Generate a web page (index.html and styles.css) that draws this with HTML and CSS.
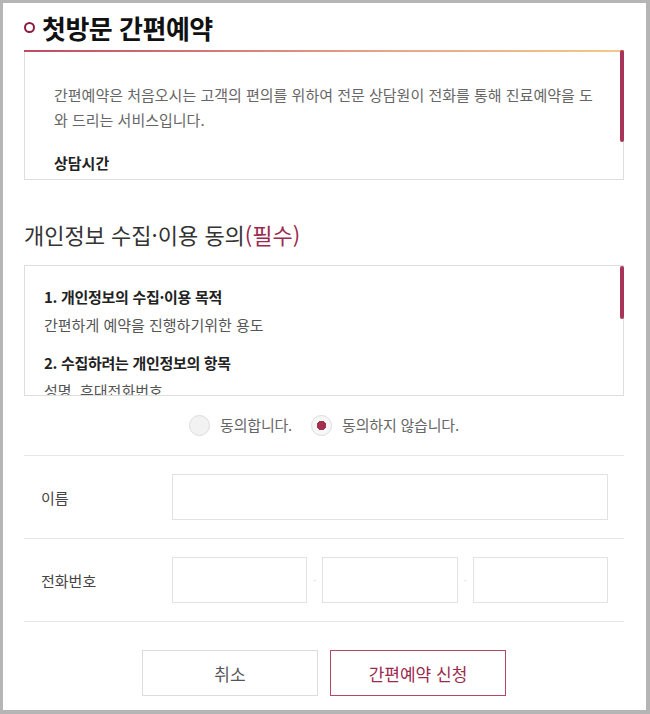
FILE: index.html
```html
<!DOCTYPE html>
<html lang="ko">
<head>
<meta charset="utf-8">
<title>첫방문 간편예약</title>
<link rel="stylesheet" href="styles.css">
</head>
<body>
<div class="panel">
  <h1 class="title"><span class="bullet"></span>첫방문 간편예약</h1>

  <div class="info-wrap">
    <div class="rule"></div>
    <div class="info">
      <p class="info-text">간편예약은 처음오시는 고객의 편의를 위하여 전문 상담원이 전화를 통해 진료예약을 도와 드리는 서비스입니다.</p>
      <p class="info-sub">상담시간</p>
    </div>
    <span class="thumb thumb-info"></span>
  </div>

  <h2 class="section-title">개인정보 수집·이용 동의<em>(필수)</em></h2>

  <div class="terms-wrap">
    <div class="terms">
      <div class="term">
        <h3>1. 개인정보의 수집·이용 목적</h3>
        <p>간편하게 예약을 진행하기위한 용도</p>
      </div>
      <div class="term">
        <h3>2. 수집하려는 개인정보의 항목</h3>
        <p>성명, 휴대전화번호</p>
      </div>
    </div>
    <span class="thumb thumb-terms"></span>
  </div>

  <div class="agree">
    <label class="radio"><input type="radio" name="agree">동의합니다.</label>
    <label class="radio"><input type="radio" name="agree" checked>동의하지 않습니다.</label>
  </div>

  <div class="form">
    <div class="row">
      <span class="label">이름</span>
      <input class="field" type="text">
    </div>
    <div class="row">
      <span class="label">전화번호</span>
      <div class="phone">
        <input class="field" type="text">
        <span class="dash">-</span>
        <input class="field" type="text">
        <span class="dash">-</span>
        <input class="field" type="text">
      </div>
    </div>
  </div>

  <div class="buttons">
    <button class="btn" type="button">취소</button>
    <button class="btn btn-primary" type="button">간편예약 신청</button>
  </div>
</div>
</body>
</html>
```

FILE: styles.css
```css
* { box-sizing: border-box; }

html, body { height: 100%; }

body {
  margin: 0;
  padding: 3px 4px 4px 3px;
  background: #b5b5b5;
  font-family: "Noto Sans CJK KR", "Noto Sans", sans-serif;
  color: #333;
  overflow: hidden;
}

.panel {
  height: 100%;
  background: #fff;
  padding: 10px 22px 14px 21px;
}

.title {
  margin: 0;
  display: flex;
  align-items: center;
  gap: 7px;
  font-size: 26px;
  font-weight: 700;
  line-height: 30px;
  letter-spacing: -0.5px;
  color: #111;
  margin-bottom: 7px;
}

.bullet {
  flex: none;
  width: 11px;
  height: 11px;
  border: 2.5px solid #8c1d3d;
  border-radius: 50%;
  margin-top: -1px;
}

.info-wrap, .terms-wrap { position: relative; }

.rule {
  height: 2px;
  background: linear-gradient(to right, #c04a62, #e8a488 60%, #f2c98a);
}

.info {
  height: 128px;
  border: 1px solid #dedede;
  border-top: 0;
  padding: 30px 30px 0 29px;
  overflow: hidden;
}

.info-text {
  margin: 0;
  font-size: 15px;
  line-height: 25px;
  color: #666;
}

.info-sub {
  margin: 18px 0 0;
  font-size: 15px;
  font-weight: 700;
  line-height: 25px;
  color: #222;
}

.thumb {
  position: absolute;
  right: 0;
  width: 4px;
  border-radius: 2px;
  background: #a8345a;
}

.thumb-info { top: 0; height: 92px; }
.thumb-terms { top: 1px; height: 53px; }

.section-title {
  margin: 39px 0 16px;
  font-size: 22px;
  font-weight: 400;
  line-height: 30px;
  color: #333;
}

.section-title em {
  font-style: normal;
  color: #9b2a4e;
}

.terms {
  height: 131px;
  border: 1px solid #dedede;
  padding: 17px 19px 0;
  overflow: hidden;
}

.term { margin-bottom: 10px; }

.term h3 {
  margin: 0;
  font-size: 15px;
  font-weight: 700;
  line-height: 28px;
  letter-spacing: -0.3px;
  color: #222;
}

.term p {
  margin: 0;
  font-size: 15px;
  line-height: 28px;
  color: #555;
}

.agree {
  display: flex;
  justify-content: center;
  gap: 19px;
  margin: 18px 0 19px;
}

.radio {
  display: flex;
  align-items: center;
  gap: 10px;
  font-size: 15px;
  line-height: 22px;
  letter-spacing: -0.2px;
  color: #666;
}

.radio input {
  appearance: none;
  -webkit-appearance: none;
  margin: 0;
  width: 21px;
  height: 21px;
  border: 1px solid #dcdcdc;
  border-radius: 50%;
  background: #f2f2f2;
}

.radio input:checked {
  background: radial-gradient(circle, #a3304f 0 4.5px, #f7f7f7 5px);
}

.form { border-top: 1px solid #e6e6e6; }

.row {
  display: grid;
  grid-template-columns: 131px 1fr;
  align-items: center;
  padding: 18px 16px 18px 17px;
  border-bottom: 1px solid #e6e6e6;
}

.label {
  font-size: 15px;
  color: #444;
}

.field {
  display: block;
  width: 100%;
  height: 46px;
  margin: 0;
  border: 1px solid #e2e2e2;
  background: #fff;
  font: inherit;
}

.phone {
  display: grid;
  grid-template-columns: 1fr 15px 1fr 15px 1fr;
  align-items: center;
}

.dash {
  text-align: center;
  font-size: 9px;
  color: #d8d8d8;
}

.buttons {
  display: flex;
  justify-content: center;
  gap: 12px;
  margin-top: 28px;
}

.btn {
  width: 176px;
  height: 46px;
  border: 1px solid #dcdcdc;
  background: #fff;
  font-family: inherit;
  font-size: 17px;
  color: #555;
}

.btn-primary {
  border-color: #b24766;
  color: #9b2a4e;
}
```
